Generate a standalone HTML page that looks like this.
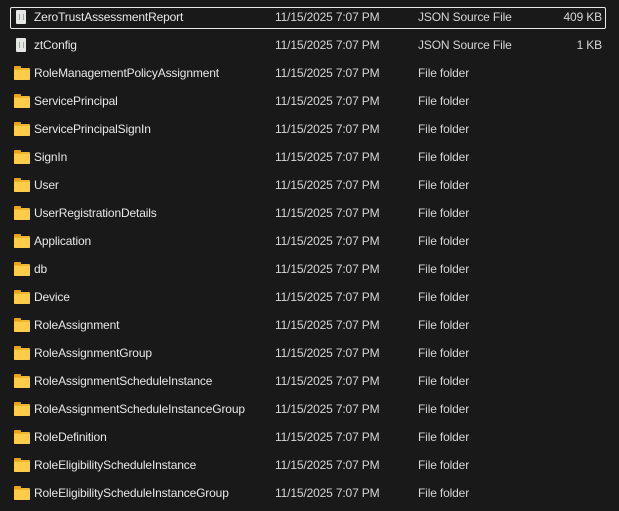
<html><head><style>
body{margin:0;background:#191919;width:619px;height:511px;overflow:hidden;font-family:"Liberation Sans",sans-serif;font-size:12px;color:#e8e8e8;letter-spacing:-0.15px}
.r{position:absolute;left:10px;width:596px;height:22px}
.r span{position:absolute;top:3px;white-space:nowrap}
.n{left:24px}.d{left:265px;color:#d6d6d6}.t{left:408px;color:#d6d6d6}.s{right:4px;color:#d6d6d6}
.sel{border:1px solid #e8e8e8;border-radius:2px;box-sizing:border-box}
.sel span{margin-left:-1px;margin-top:-1px}
.sel .s{margin-right:-1px}
.sel i{margin-left:-1px;margin-top:-1px}
.fo{position:absolute;left:4px;top:5px;width:16px;height:12px;background:#f3b62c;border-radius:1px}
.fo:before{content:"";position:absolute;left:0;top:-2px;width:7px;height:3px;background:#e8a21c;border-radius:1px 1px 0 0}
.fo:after{content:"";position:absolute;left:0;top:2px;width:16px;height:10px;background:#ffcc4a;border-radius:1px}
.fi{position:absolute;left:6px;top:3px;width:10px;height:14px;background:#e6e6e6;border-radius:1px}
.fi:after{content:"";position:absolute;left:3px;top:4px;width:3px;height:6px;border-left:1px solid #9a9;border-right:1px solid #9a9}
</style></head><body>
<div class="r sel" style="top:7px"><i class="fi"></i><span class="n">ZeroTrustAssessmentReport</span><span class="d">11/15/2025 7:07 PM</span><span class="t">JSON Source File</span><span class="s">409 KB</span></div>
<div class="r" style="top:35px"><i class="fi"></i><span class="n">ztConfig</span><span class="d">11/15/2025 7:07 PM</span><span class="t">JSON Source File</span><span class="s">1 KB</span></div>
<div class="r" style="top:63px"><i class="fo"></i><span class="n">RoleManagementPolicyAssignment</span><span class="d">11/15/2025 7:07 PM</span><span class="t">File folder</span></div>
<div class="r" style="top:91px"><i class="fo"></i><span class="n">ServicePrincipal</span><span class="d">11/15/2025 7:07 PM</span><span class="t">File folder</span></div>
<div class="r" style="top:119px"><i class="fo"></i><span class="n">ServicePrincipalSignIn</span><span class="d">11/15/2025 7:07 PM</span><span class="t">File folder</span></div>
<div class="r" style="top:147px"><i class="fo"></i><span class="n">SignIn</span><span class="d">11/15/2025 7:07 PM</span><span class="t">File folder</span></div>
<div class="r" style="top:175px"><i class="fo"></i><span class="n">User</span><span class="d">11/15/2025 7:07 PM</span><span class="t">File folder</span></div>
<div class="r" style="top:203px"><i class="fo"></i><span class="n">UserRegistrationDetails</span><span class="d">11/15/2025 7:07 PM</span><span class="t">File folder</span></div>
<div class="r" style="top:231px"><i class="fo"></i><span class="n">Application</span><span class="d">11/15/2025 7:07 PM</span><span class="t">File folder</span></div>
<div class="r" style="top:259px"><i class="fo"></i><span class="n">db</span><span class="d">11/15/2025 7:07 PM</span><span class="t">File folder</span></div>
<div class="r" style="top:287px"><i class="fo"></i><span class="n">Device</span><span class="d">11/15/2025 7:07 PM</span><span class="t">File folder</span></div>
<div class="r" style="top:315px"><i class="fo"></i><span class="n">RoleAssignment</span><span class="d">11/15/2025 7:07 PM</span><span class="t">File folder</span></div>
<div class="r" style="top:343px"><i class="fo"></i><span class="n">RoleAssignmentGroup</span><span class="d">11/15/2025 7:07 PM</span><span class="t">File folder</span></div>
<div class="r" style="top:371px"><i class="fo"></i><span class="n">RoleAssignmentScheduleInstance</span><span class="d">11/15/2025 7:07 PM</span><span class="t">File folder</span></div>
<div class="r" style="top:399px"><i class="fo"></i><span class="n">RoleAssignmentScheduleInstanceGroup</span><span class="d">11/15/2025 7:07 PM</span><span class="t">File folder</span></div>
<div class="r" style="top:427px"><i class="fo"></i><span class="n">RoleDefinition</span><span class="d">11/15/2025 7:07 PM</span><span class="t">File folder</span></div>
<div class="r" style="top:455px"><i class="fo"></i><span class="n">RoleEligibilityScheduleInstance</span><span class="d">11/15/2025 7:07 PM</span><span class="t">File folder</span></div>
<div class="r" style="top:483px"><i class="fo"></i><span class="n">RoleEligibilityScheduleInstanceGroup</span><span class="d">11/15/2025 7:07 PM</span><span class="t">File folder</span></div>
</body></html>
